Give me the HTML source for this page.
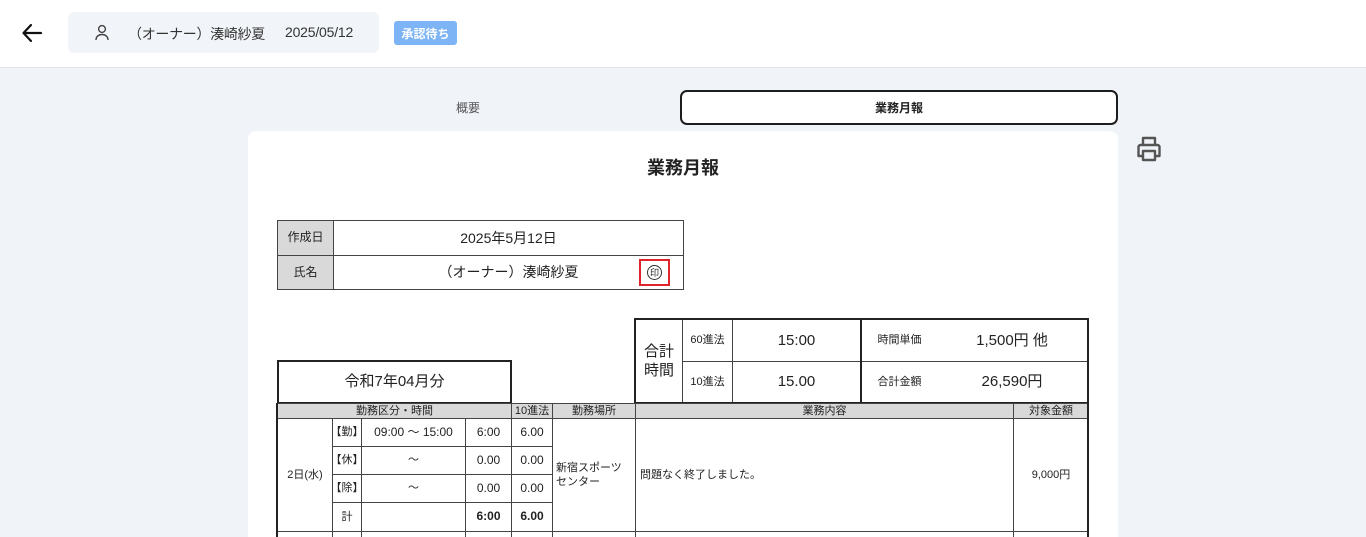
<!DOCTYPE html>
<html><head><meta charset="utf-8"><style>
*{margin:0;padding:0;box-sizing:border-box}
html,body{width:1366px;height:537px;overflow:hidden}
body{background:#f0f3f8;font-family:"Liberation Sans","Noto Sans CJK JP",sans-serif;color:#222;position:relative}
.a{position:absolute}
.c{position:absolute;border:1px solid #444;display:flex;align-items:center;justify-content:center;font-size:11px;color:#222;background:#fff;text-align:center;line-height:1.3}
.g{background:#d9d9d9}
.k{border:2px solid #222}
</style></head><body>
<div class="a" style="left:0;top:0;width:1366px;height:68px;background:#fff;border-bottom:1px solid #e1e4ea"></div>
<svg class="a" style="left:21px;top:22px" width="22" height="22" viewBox="0 0 22 22"><path d="M20 11H3M10 3L2.5 11 10 19" fill="none" stroke="#111" stroke-width="2.2" stroke-linecap="round" stroke-linejoin="round"/></svg>
<div class="a" style="left:68px;top:12px;width:311px;height:41px;background:#f1f4f8;border-radius:6px"></div>
<svg class="a" style="left:94px;top:24px" width="16" height="17" viewBox="0 0 16 17"><circle cx="8" cy="5" r="3.4" fill="none" stroke="#444" stroke-width="1.4"/><path d="M2 16c0-3.5 2.7-5.5 6-5.5s6 2 6 5.5" fill="none" stroke="#444" stroke-width="1.4"/></svg>
<div class="a" style="left:128px;top:24px;font-size:14px;color:#333;white-space:nowrap;letter-spacing:-0.3px">（オーナー）湊崎紗夏</div>
<div class="a" style="left:285px;top:24px;font-size:14px;color:#333;white-space:nowrap;letter-spacing:-0.2px">2025/05/12</div>
<div class="a" style="left:394px;top:21px;width:63px;height:24px;background:#7db4f5;border-radius:3px;color:#fff;font-size:12px;font-weight:bold;display:flex;align-items:center;justify-content:center">承認待ち</div>
<div class="a" style="left:440px;top:99px;width:56px;text-align:center;font-size:12px;color:#555">概要</div>
<div class="a" style="left:680px;top:90px;width:438px;height:35px;background:#fff;border:2px solid #1d1d1d;border-radius:7px;display:flex;align-items:center;justify-content:center;font-size:12px;font-weight:bold">業務月報</div>
<div class="a" style="left:248px;top:131px;width:870px;height:406px;background:#fff;border-radius:8px 8px 0 0"></div>
<svg class="a" style="left:1134px;top:134px" width="30" height="30" viewBox="0 0 30 30"><g fill="none" stroke="#555" stroke-width="2.4" stroke-linejoin="round"><path d="M9 11V4h12v7"/><path d="M9 22H4.5V13a2 2 0 0 1 2-2h17a2 2 0 0 1 2 2v9H21"/><rect x="9" y="17" width="12" height="9"/></g></svg>
<div class="a" style="left:0;width:1366px;top:154px;text-align:center;font-size:18px;font-weight:bold">業務月報</div>

<div class="c g" style="left:277px;top:220px;width:57px;height:36px;font-size:12px">作成日</div>
<div class="c" style="left:333px;top:220px;width:351px;height:36px;font-size:14px">2025年5月12日</div>
<div class="c g" style="left:277px;top:255px;width:57px;height:35px;font-size:12px">氏名</div>
<div class="c" style="left:333px;top:255px;width:351px;height:35px;font-size:14px">（オーナー）湊崎紗夏</div>
<div class="a" style="left:639px;top:259px;width:31px;height:27px;border:2px solid #e0242b;display:flex;align-items:center;justify-content:center;font-size:11px;background:#fff"><span style="border:1px solid #333;border-radius:50%;width:15px;height:15px;font-size:9px;display:flex;align-items:center;justify-content:center">印</span></div>

<div class="a k" style="left:634px;top:318px;width:455px;height:86px"></div>
<div class="c" style="left:636px;top:320px;width:47px;height:82px;border:none;border-right:1px solid #444;font-size:15px">合計<br>時間</div>
<div class="c" style="left:682px;top:320px;width:51px;height:42px;border-top:none;font-size:11px">60進法</div>
<div class="c" style="left:682px;top:361px;width:51px;height:41px;border-bottom:none;font-size:11px">10進法</div>
<div class="c" style="left:732px;top:320px;width:129px;height:42px;border-top:none;font-size:15px">15:00</div>
<div class="c" style="left:732px;top:361px;width:129px;height:41px;border-bottom:none;font-size:15px">15.00</div>
<div class="a" style="left:860px;top:319px;width:2px;height:84px;background:#222"></div>
<div class="c" style="left:862px;top:320px;width:76px;height:42px;border-top:none;border-left:none;font-size:11px">時間単価</div>
<div class="c" style="left:862px;top:361px;width:76px;height:41px;border-bottom:none;border-left:none;font-size:11px">合計金額</div>
<div class="c" style="left:937px;top:320px;width:150px;height:42px;border:none;border-bottom:1px solid #444;font-size:15px">1,500円 他</div>
<div class="c" style="left:937px;top:362px;width:150px;height:40px;border:none;font-size:15px">26,590円</div>

<div class="c k" style="left:277px;top:360px;width:235px;height:44px;font-size:15px">令和7年04月分</div>

<div class="c g" style="left:277px;top:403px;width:235px;height:16px">勤務区分・時間</div>
<div class="c g" style="left:511px;top:403px;width:42px;height:16px">10進法</div>
<div class="c g" style="left:552px;top:403px;width:84px;height:16px">勤務場所</div>
<div class="c g" style="left:635px;top:403px;width:379px;height:16px">業務内容</div>
<div class="c g" style="left:1013px;top:403px;width:76px;height:16px">対象金額</div>

<div class="c" style="left:277px;top:418px;width:56px;height:114px">2日(水)</div>
<div class="c" style="left:332px;top:418px;width:30px;height:29px">【勤】</div>
<div class="c" style="left:361px;top:418px;width:105px;height:29px;font-size:12px">09:00 ～ 15:00</div>
<div class="c" style="left:465px;top:418px;width:47px;height:29px;font-size:12px">6:00</div>
<div class="c" style="left:511px;top:418px;width:42px;height:29px;font-size:12px">6.00</div>
<div class="c" style="left:332px;top:446px;width:30px;height:29px">【休】</div>
<div class="c" style="left:361px;top:446px;width:105px;height:29px">～</div>
<div class="c" style="left:465px;top:446px;width:47px;height:29px;font-size:12px">0.00</div>
<div class="c" style="left:511px;top:446px;width:42px;height:29px;font-size:12px">0.00</div>
<div class="c" style="left:332px;top:474px;width:30px;height:29px">【除】</div>
<div class="c" style="left:361px;top:474px;width:105px;height:29px">～</div>
<div class="c" style="left:465px;top:474px;width:47px;height:29px;font-size:12px">0.00</div>
<div class="c" style="left:511px;top:474px;width:42px;height:29px;font-size:12px">0.00</div>
<div class="c" style="left:332px;top:502px;width:30px;height:30px">計</div>
<div class="c" style="left:361px;top:502px;width:105px;height:30px"></div>
<div class="c" style="left:465px;top:502px;width:47px;height:30px;font-weight:bold;font-size:12px">6:00</div>
<div class="c" style="left:511px;top:502px;width:42px;height:30px;font-weight:bold;font-size:12px">6.00</div>
<div class="c" style="left:552px;top:418px;width:84px;height:114px;justify-content:flex-start;text-align:left;padding:0 3px">新宿スポーツセンター</div>
<div class="c" style="left:635px;top:418px;width:379px;height:114px;justify-content:flex-start;padding:0 4px">問題なく終了しました。</div>
<div class="c" style="left:1013px;top:418px;width:76px;height:114px">9,000円</div>
<div class="c" style="left:277px;top:531px;width:56px;height:10px"></div>
<div class="c" style="left:332px;top:531px;width:30px;height:10px"></div>
<div class="c" style="left:361px;top:531px;width:105px;height:10px"></div>
<div class="c" style="left:465px;top:531px;width:47px;height:10px"></div>
<div class="c" style="left:511px;top:531px;width:42px;height:10px"></div>
<div class="c" style="left:552px;top:531px;width:84px;height:10px"></div>
<div class="c" style="left:635px;top:531px;width:379px;height:10px"></div>
<div class="c" style="left:1013px;top:531px;width:76px;height:10px"></div>
<div class="a" style="left:276px;top:403px;width:2px;height:134px;background:#222"></div>
<div class="a" style="left:1087px;top:403px;width:2px;height:134px;background:#222"></div>
</body></html>
